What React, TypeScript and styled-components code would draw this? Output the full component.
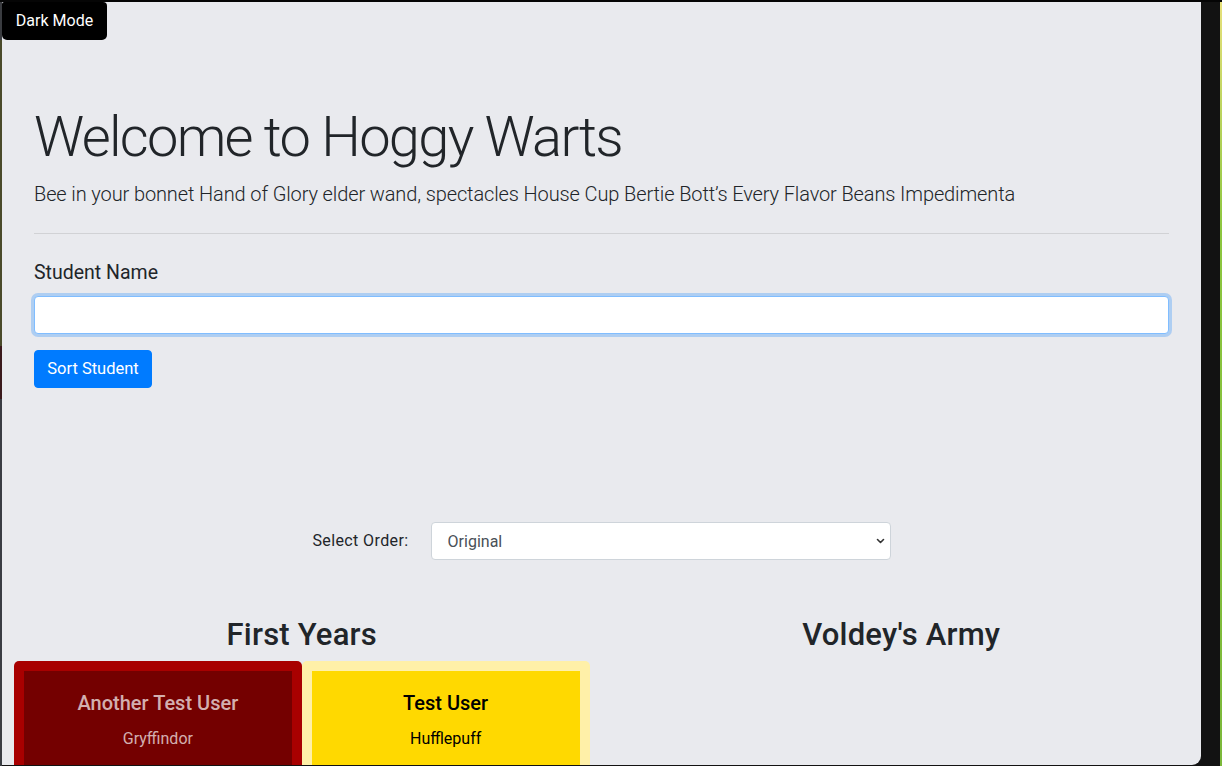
import React from "react";
import styled, { createGlobalStyle } from "styled-components";

const Global = createGlobalStyle`
  html, body { margin: 0; padding: 0; background: #121212; }
  body {
    font-family: Roboto, "Noto Sans", "Liberation Sans", sans-serif;
    color: #212529;
    font-size: 16px;
    line-height: 1.5;
  }
  * { box-sizing: border-box; }
`;

const Frame = styled.div`
  width: 1222px;
  height: 766px;
  display: flex;
  background: #121212;
  border-top: 2px solid #050505;
  position: relative;
  overflow: hidden;
`;

const LeftEdge = styled.div`
  width: 2px;
  flex: none;
  background: linear-gradient(#3a3c40 0 5%, #4a4a2a 5% 45%, #3b1a1c 45% 52%, #3a3d43 52% 100%);
`;

const RightEdge = styled.div`
  width: 2px;
  margin-left: auto;
  flex: none;
  background: linear-gradient(#e6e07a, #8cc63f 30%, #7bb83a);
`;

const Panel = styled.div`
  width: 1199px;
  height: 763px;
  flex: none;
  background: #e9eaee;
  border-bottom-right-radius: 9px;
  overflow: hidden;
  display: flex;
  flex-direction: column;
  & > * { flex-shrink: 0; }
`;

const ModeButton = styled.button`
  align-self: flex-start;
  background: #000;
  color: #fff;
  border: none;
  border-radius: 2px 4px 5px 5px;
  font-family: inherit;
  font-size: 16px;
  line-height: 24px;
  padding: 7px 12px;
  height: 38px;
  width: 105px;
  white-space: nowrap;
  cursor: pointer;
`;

const Jumbotron = styled.section`
  padding: 64px 32px 64px 32px;
  margin-bottom: 70px;
`;

const Title = styled.h1`
  margin: 0 0 8px;
  font-size: 56px;
  font-weight: 300;
  line-height: 67px;
  letter-spacing: -1.7px;
  color: #212529;
`;

const Lead = styled.p`
  margin: 0;
  font-size: 20px;
  font-weight: 300;
  line-height: 30px;
  letter-spacing: -0.12px;
`;

const Rule = styled.hr`
  margin: 24px 0;
  border: 0;
  border-top: 1px solid rgba(0, 0, 0, 0.1);
`;

const Label = styled.label`
  display: block;
  font-size: 19.5px;
  font-weight: 400;
  line-height: 30px;
  margin-bottom: 8px;
`;

const TextInput = styled.input`
  display: block;
  width: 100%;
  height: 38px;
  padding: 6px 12px;
  font-size: 16px;
  font-family: inherit;
  color: #495057;
  background: #fff;
  border: 1px solid #80bdff;
  border-radius: 4px;
  box-shadow: 0 0 0 3px rgba(0, 123, 255, 0.25);
  outline: none;
  margin-bottom: 16px;
`;

const PrimaryButton = styled.button`
  display: inline-block;
  background: #007bff;
  color: #fff;
  border: 1px solid #007bff;
  border-radius: 4px;
  font-family: inherit;
  font-size: 16.5px;
  line-height: 24px;
  padding: 6px 0;
  height: 38px;
  width: 118px;
  white-space: nowrap;
  cursor: pointer;
`;

const OrderRow = styled.div`
  display: flex;
  align-items: center;
  justify-content: center;
  gap: 22px;
  margin-bottom: 56px;
`;

const OrderLabel = styled.span`
  font-size: 16px;
  letter-spacing: 0.4px;
  color: #212529;
`;

const SelectWrap = styled.div`
  position: relative;
  width: 460px;
`;

const Select = styled.select`
  appearance: none;
  -webkit-appearance: none;
  width: 100%;
  height: 38px;
  padding: 6px 16px;
  font-family: inherit;
  font-size: 16px;
  color: #495057;
  background: #fff;
  border: 1px solid #ced4da;
  border-radius: 4px;
  outline: none;
`;

const Chevron = styled.svg`
  position: absolute;
  right: 6px;
  top: 15px;
  pointer-events: none;
`;

const Columns = styled.div`
  display: grid;
  grid-template-columns: 1fr 1fr;
`;

const Column = styled.div`
  padding: 0 12px;
  display: flex;
  flex-direction: column;
`;

const ColumnTitle = styled.h2`
  margin: 0 0 7px;
  text-align: center;
  font-size: 31px;
  font-weight: 500;
  line-height: 38px;
  letter-spacing: 0.2px;
  color: #212529;
`;

const CardRow = styled.div`
  display: flex;
`;

const Card = styled.div<{ $outer: string }>`
  flex: 1 1 0;
  padding: 10px;
  background: ${(p) => p.$outer};
  border-radius: 5px 5px 0 0;
`;

const CardInner = styled.div<{ $bg: string; $fg: string }>`
  background: ${(p) => p.$bg};
  color: ${(p) => p.$fg};
  padding: 20px 12px 20px;
  text-align: center;
  min-height: 120px;
`;

const CardName = styled.h5`
  margin: 0 0 12px;
  font-size: 20px;
  font-weight: 500;
  line-height: 24px;
`;

const CardHouse = styled.p`
  margin: 0;
  font-size: 16px;
  line-height: 24px;
`;

const students = [
  { name: "Another Test User", house: "Gryffindor", outer: "#a80000", bg: "#740000", fg: "rgba(255,255,255,0.7)" },
  { name: "Test User", house: "Hufflepuff", outer: "#fff0a8", bg: "#ffd900", fg: "#000" },
];

export default function App() {
  return (
    <>
      <Global />
      <Frame>
        <LeftEdge />
        <Panel>
          <ModeButton>Dark Mode</ModeButton>
          <Jumbotron>
            <Title>Welcome to Hoggy Warts</Title>
            <Lead>
              Bee in your bonnet Hand of Glory elder wand, spectacles House Cup Bertie Bott’s Every Flavor Beans Impedimenta
            </Lead>
            <Rule />
            <Label htmlFor="student">Student Name</Label>
            <TextInput id="student" type="text" />
            <PrimaryButton>Sort Student</PrimaryButton>
          </Jumbotron>
          <OrderRow>
            <OrderLabel>Select Order:</OrderLabel>
            <SelectWrap>
              <Select defaultValue="original">
                <option value="original">Original</option>
                <option value="az">A-Z</option>
              </Select>
              <Chevron width="9" height="8" viewBox="0 0 9 8">
                <path d="M1.5 2.5 L4.5 5.5 L7.5 2.5" fill="none" stroke="#333" strokeWidth="1.6" strokeLinecap="round" strokeLinejoin="round" />
              </Chevron>
            </SelectWrap>
          </OrderRow>
          <Columns>
            <Column>
              <ColumnTitle>First Years</ColumnTitle>
              <CardRow>
                {students.map((s) => (
                  <Card key={s.name} $outer={s.outer}>
                    <CardInner $bg={s.bg} $fg={s.fg}>
                      <CardName>{s.name}</CardName>
                      <CardHouse>{s.house}</CardHouse>
                    </CardInner>
                  </Card>
                ))}
              </CardRow>
            </Column>
            <Column>
              <ColumnTitle>Voldey's Army</ColumnTitle>
            </Column>
          </Columns>
        </Panel>
        <RightEdge />
      </Frame>
    </>
  );
}
